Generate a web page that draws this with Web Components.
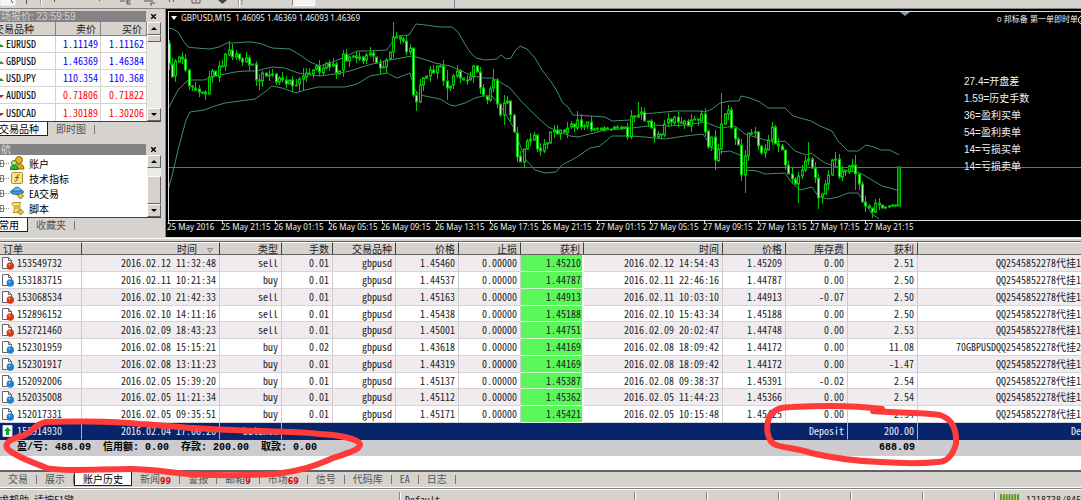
<!DOCTYPE html>
<html lang="zh-CN">
<head>
<meta charset="utf-8">
<title>GBPUSD,M15</title>
<style>
  html, body {
    height: 100%;
  }

  body {
    margin: 0;
    overflow: hidden;
    font-family: "Noto Sans Mono CJK SC", "Liberation Mono", "Noto Sans CJK SC", monospace;
    font-size: 10px;
    line-height: 12px;
    color: #1c1c1c;
    background: #d6d3ce;
  }
</style>
</head>
<body>
<trading-terminal></trading-terminal>

<script>
class TerminalToolbar extends HTMLElement {
  constructor () {
    super()
    this.shadow = this.attachShadow({ mode: 'open' })
    this.periods = ['M1', 'M5', 'M15', 'M30', 'H1', 'H4', 'D1', 'W1', 'MN']
  }

  connectedCallback () {
    this.render()
  }

  render () {
    this.shadow.innerHTML =
      /* html */`
        <style>
          :host {
            display: flex;
            align-items: flex-end;
            height: 9px;
            overflow: hidden;
            border-bottom: 1px solid #848284;
            box-sizing: border-box;
            background: #d6d3ce;
          }

          .tools {
            display: block;
            width: 246px;
            height: 8px;
            flex: none;
          }

          nav {
            display: flex;
            padding-bottom: 2px;
            padding-right: 1px;
            border-right: 1px solid #848284;
          }

          button {
            width: 23px;
            height: 22px;
            padding: 0 0 3px;
            display: flex;
            justify-content: center;
            align-items: flex-end;
            border: 1px solid transparent;
            background: none;
            color: #444;
            font: 9px/10px "Liberation Sans", sans-serif;
          }

          button[aria-pressed="true"] {
            background: #f4f2f0;
            border-color: #848284 #fff #fff #848284;
          }
        </style>
        <svg class="tools" viewBox="0 0 246 8" fill="none" stroke="#555">
          <path d="M1 0h14v5H1z" fill="#f4f2f0" stroke="#fff"/>
          <path d="M11 0l2 3M26.500 0v4M54.500 0v2M99 1l2-2M120 1h5M127 0v4M127 0h4M127 2h3M127 4h4M144 1h9M151 3h4M151 3v3M169 0l1 2M174 0l-1 2M192 0v3h8V0M196 0v2"/>
          <path d="M218 0h9l-4.500 4z" fill="#444" stroke="none"/>
          <path d="M40.500 0v5M238.500 0v7" stroke="#999"/>
          <path d="M239.500 0v7M41.500 0v5" stroke="#fff"/>
          <path d="M242 0v6" stroke="#999" stroke-dasharray="1 1" stroke-width="2"/>
        </svg>
        <nav>
          ${this.periods.map(p => `<button type="button" aria-pressed="${p === 'M15'}">${p}</button>`).join('')}
        </nav>
      `
  }
}

customElements.define('terminal-toolbar', TerminalToolbar)

class DockPanel extends HTMLElement {
  constructor () {
    super()
    this.shadow = this.attachShadow({ mode: 'open' })
  }

  connectedCallback () {
    this.render()
  }

  render () {
    this.shadow.innerHTML =
      /* html */`
        <style>
          :host {
            display: block;
          }

          header {
            display: flex;
            align-items: center;
            height: 12px;
            background: #d6d3ce;
          }

          h2 {
            flex: 1;
            height: 11px;
            margin: 0;
            padding-left: 3px;
            color: #d6d3ce;
            background: #848284;
            font: 10px/11px "Liberation Sans", "Noto Sans CJK SC", sans-serif;
          }

          button {
            width: 15px;
            height: 12px;
            padding: 0;
            border: 0;
            background: none;
          }

          svg {
            display: block;
            margin: auto;
          }

          .body {
            display: flex;
            border-bottom: 1px solid #424142;
          }

          .body slot {
            display: block;
            flex: 1;
            min-width: 0;
          }
        </style>
        <header>
          <h2>${this.getAttribute('heading')}</h2>
          <button type="button" aria-label="关闭">
            <svg width="5" height="5" viewBox="0 0 5 5"><path d="M0 0l5 5M5 0L0 5" stroke="#000" stroke-width="1.400"/></svg>
          </button>
        </header>
        <div class="body">
          <slot></slot>
          <scroll-rail thumb="${this.getAttribute('thumb')}"></scroll-rail>
        </div>
        <slot name="tabs"></slot>
      `
  }
}

customElements.define('dock-panel', DockPanel)

class ScrollRail extends HTMLElement {
  constructor () {
    super()
    this.shadow = this.attachShadow({ mode: 'open' })
  }

  connectedCallback () {
    this.render()
  }

  render () {
    const [offset, size] = this.getAttribute('thumb').split(' ')
    this.shadow.innerHTML =
      /* html */`
        <style>
          :host {
            display: flex;
            flex-direction: column;
            width: 14px;
            background: #ecebe8;
          }

          button, .thumb {
            box-sizing: border-box;
            border: 1px solid;
            border-color: #fff #636163 #636163 #fff;
            background: #d6d3ce;
          }

          button {
            height: 13px;
            padding: 0;
            flex: none;
          }

          svg {
            display: block;
            margin: auto;
          }

          .track {
            flex: 1;
            padding-top: ${offset}px;
          }

          .thumb {
            height: ${size}px;
          }
        </style>
        <button type="button" aria-label="向上"><svg width="6" height="3" viewBox="0 0 6 3"><path d="M0 3l3-3 3 3z"/></svg></button>
        <div class="track"><div class="thumb"></div></div>
        <button type="button" aria-label="向下"><svg width="6" height="3" viewBox="0 0 6 3"><path d="M0 0l3 3 3-3z"/></svg></button>
      `
  }
}

customElements.define('scroll-rail', ScrollRail)

class TabStrip extends HTMLElement {
  constructor () {
    super()
    this.shadow = this.attachShadow({ mode: 'open' })
  }

  connectedCallback () {
    this.render()
  }

  // "name:count" shows an unread counter beside the name
  render () {
    const active = this.getAttribute('active')
    const tabs = this.getAttribute('tabs').split(',').map(t => t.split(':'))
    this.shadow.innerHTML =
      /* html */`
        <style>
          :host {
            display: flex;
            align-items: flex-start;
            height: 16px;
          }

          button {
            display: flex;
            align-items: center;
            height: 14px;
            padding: 0 8px;
            border: 0;
            background: none;
            color: #555;
            font: inherit;
            white-space: nowrap;
          }

          button:not([aria-selected="true"])::after {
            content: "";
            width: 1px;
            height: 9px;
            margin-left: 8px;
            margin-right: -8px;
            background: #777;
          }

          button[aria-selected="true"] {
            color: #000;
            background: #fff;
            border: solid #222;
            border-width: 0 1px 1px;
          }

          b {
            align-self: flex-end;
            color: #e00010;
            font: bold 8px/8px "DejaVu Sans", sans-serif;
          }
        </style>
        ${tabs.map(([name, count]) => `
          <button type="button" role="tab" aria-selected="${name === active}">${name}${count ? `<b>${count}</b>` : ''}</button>
        `).join('')}
      `
  }
}

customElements.define('tab-strip', TabStrip)

class MarketWatch extends HTMLElement {
  constructor () {
    super()
    this.shadow = this.attachShadow({ mode: 'open' })
    this.quotes = [
      ['EURUSD', '1.11149', '1.11162', 'up'],
      ['GBPUSD', '1.46369', '1.46384', 'up'],
      ['USDJPY', '110.354', '110.368', 'up'],
      ['AUDUSD', '0.71806', '0.71822', 'down'],
      ['USDCAD', '1.30189', '1.30206', 'down']
    ]
  }

  connectedCallback () {
    this.render()
  }

  render () {
    this.shadow.innerHTML =
      /* html */`
        <style>
          :host {
            display: block;
          }

          table {
            width: 100%;
            table-layout: fixed;
            border-collapse: separate;
            border-spacing: 0;
          }

          th, td {
            box-sizing: border-box;
            padding: 0 2px;
            text-align: right;
            white-space: nowrap;
          }

          th {
            height: 14px;
            padding-right: 4px;
            font-weight: normal;
            background: #d6d3ce;
            border-right: 1px solid #848284;
            border-bottom: 1px solid #848284;
          }

          td {
            height: 17px;
            background: #fff;
            border-right: 1px solid #d6d3ce;
            border-bottom: 1px solid #d6d3ce;
          }

          tr:last-child td {
            border-bottom: 0;
          }

          th:first-child {
            text-align: left;
            padding-left: 6px;
          }

          td:first-child {
            text-align: left;
            color: #000;
          }

          svg {
            width: 16px;
            height: 5px;
          }

          .up { color: #0000ff; }
          .down { color: #ff0000; }
        </style>
        <table>
          <colgroup><col><col style="width: 45px"><col style="width: 46px"></colgroup>
          <thead><tr><th>交易品种</th><th>卖价</th><th>买价</th></tr></thead>
          <tbody>
            ${this.quotes.map(([name, bid, ask, dir]) => `
              <tr class="${dir}">
                <td><svg viewBox="0 0 16 5"><path d="${dir === 'up' ? 'M8 4l3-3 3 3z' : 'M8 1l3 3 3-3z'}" fill="${dir === 'up' ? '#2c8a3c' : '#b02020'}"/></svg>${name}</td>
                <td>${bid}</td>
                <td>${ask}</td>
              </tr>`).join('')}
          </tbody>
        </table>
      `
  }
}

customElements.define('market-watch', MarketWatch)

class NavigatorTree extends HTMLElement {
  constructor () {
    super()
    this.shadow = this.attachShadow({ mode: 'open' })
    this.items = [
      ['账户', '<circle cx="9" cy="4" r="3.500" fill="#e8b818" stroke="#8a6a10"/><path d="M5 13c0-7 9-7 9 0z" fill="#e0aa10" stroke="#8a6a10"/><circle cx="4" cy="7" r="2.500" fill="#f4d878" stroke="#2c8a3c"/><path d="M0 13.500c0-6 8-6 8 0z" fill="#28b838" stroke="#187828"/>'],
      ['技术指标', '<rect x="1.500" y="1.500" width="11" height="11" rx="1" fill="#f8e488" stroke="#b89020"/><path d="M9.500 4c-2-1-2.500 1-2.500 3s-.5 4-2.500 3M5 6.500h4" fill="none" stroke="#6a5010"/>'],
      ['EA交易', '<ellipse cx="7" cy="6" rx="6.500" ry="2.500" fill="#3898d8" stroke="#1c68a0"/><path d="M3 5c0-5 8-5 8 0z" fill="#68c0f0" stroke="#1c68a0"/><path d="M10.500 7l3 3-3 3-3-3z" fill="#f0c830" stroke="#907010"/>'],
      ['脚本', '<path d="M3 1.500h8c-2 1-1 3-1 5v5H3c2-2 1-5 1-7-2 0-3-2-1-3z" fill="#f8e078" stroke="#b89020"/><path d="M5 5h4M5 7h4" stroke="#b89020"/><path d="M10.500 8l3 3-3 3-3-3z" fill="#f0c830" stroke="#907010"/>']
    ]
  }

  connectedCallback () {
    this.render()
  }

  render () {
    this.shadow.innerHTML =
      /* html */`
        <style>
          :host {
            display: block;
            background: #fff;
          }

          ul {
            margin: 0;
            padding: 1px 0 1px 9px;
            list-style: none;
          }

          li {
            display: flex;
            align-items: center;
            height: 15px;
            color: #000;
          }

          .branch {
            width: 13px;
            height: 15px;
          }

          .icon {
            width: 15px;
            height: 15px;
            margin-right: 4px;
          }
        </style>
        <ul>
          ${this.items.map(([name, art]) => `
            <li>
              <svg class="branch" viewBox="0 0 13 15"><path d="M.5 4.500h6v6h-6zM1.500 7.500h4M3.500 5.500v4" fill="none" stroke="#777"/><path d="M7 7.500h6" stroke="#999" stroke-dasharray="1 1"/></svg>
              <svg class="icon" viewBox="0 0 15 15">${art}</svg>
              <span>${name}</span>
            </li>`).join('')}
        </ul>
      `
  }
}

customElements.define('navigator-tree', NavigatorTree)

class PriceChart extends HTMLElement {
  constructor () {
    super()
    this.shadow = this.attachShadow({ mode: 'open' })
    this.step = 3.35
    this.dates = [
      '25 May 2016', '25 May 21:15', '26 May 01:15', '26 May 05:15', '26 May 09:15', '26 May 13:15', '26 May 17:15',
      '26 May 21:15', '27 May 01:15', '27 May 05:15', '27 May 09:15', '27 May 13:15', '27 May 17:15', '27 May 21:15'
    ]
    this.stats = ['27.4=开盘差', '1.59=历史手数', '36=盈利买单', '54=盈利卖单', '14=亏损买单', '14=亏损卖单']
    this.closes = '168,62 172,75 175,65 178,54 181,56 184,68 188,80 190,92 195,88 200,93 204,97 208,80 212,72 216,74 220,66 224,62 226,51 230,52 236,57 242,60 248,62 253,66 256,84 259,78 262,76 270,74 275,79 283,80 290,83 296,85 299,82 301,72 305,76 309,73 312,68 316,69 322,70 327,62 331,65 336,72 340,70 343,55 348,61 354,55 360,60 365,56 369,55 373,54 376,66 381,67 385,64 388,60 391,40 395,38 399,36 402,40 405,53 409,44 411,55 413,97 416,101 419,90 423,78 427,74 431,73 436,68 439,65 442,73 446,92 450,84 454,74 459,73 464,83 468,78 472,72 474,68 478,71 481,97 486,98 491,90 494,77 497,105 500,119 503,100 507,103 510,115 514,132 517,160 520,161 523,150 527,143 531,135 535,138 537,148 541,150 545,146 550,133 556,131 562,134 567,127 573,127 576,119 580,127 586,123 590,130 598,129 605,129 612,128 620,127 624,127 627,136 631,118 636,114 642,115 646,121 650,126 655,137 660,137 662,127 667,121 673,119 680,122 686,124 692,121 697,118 703,116 705,134 708,148 711,138 715,160 719,148 722,115 727,110 731,124 735,142 739,148 742,180 745,157 748,132 754,133 758,143 762,157 766,146 770,130 773,130 775,143 781,150 785,162 788,176 792,178 797,185 800,170 804,163 810,158 814,175 818,196 822,194 826,184 830,165 835,158 839,178 845,170 851,165 855,170 858,184 861,200 865,205 870,213 874,205 878,205 885,208 890,205 896,206 898,167 902,167'
      .split(' ').map(p => p.split(',').map(Number))
    // [x, high, low] of the bars with a long shadow
    this.spikes = [
      [229, 41, 54], [259, 74, 90], [302, 68, 90], [393, 22, 45], [416, 94, 111], [447, 70, 100], [494, 69, 92], [502, 95, 125],
      [541, 143, 156], [577, 111, 124], [591, 116, 132], [637, 102, 118], [715, 130, 170], [721, 93, 150], [745, 150, 193],
      [771, 122, 140], [798, 172, 203], [809, 142, 165], [818, 180, 209], [835, 152, 166], [855, 155, 190]
    ]
    this.bands = [
      '168,28 173,29 178,32 184,42 188,47 196,48 210,49 219,47 227,43 235,43 245,42 252,42 262,44 272,48 290,49 300,55 310,62 320,66 330,63 345,57 357,51 370,51 387,50 391,44 397,36 409,35 416,24 425,25 440,27 452,27 458,32 466,46 470,52 476,58 485,60 497,59 501,55 506,59 511,58 515,51 520,46 527,49 535,58 542,70 552,83 558,93 562,102 568,107 573,115 590,116 605,117 612,121 630,120 640,114 655,113 675,111 700,111 705,112 712,109 720,103 730,101 739,101 741,96 750,98 760,102 768,108 785,108 793,116 811,121 820,126 832,131 838,141 848,151 858,151 866,145 874,147 881,150 890,150 899,155',
      '168,109 178,90 188,80 204,80 215,76 225,74 235,72 245,71 256,71 272,67 285,68 298,73 310,75 320,76 335,74 350,71 365,66 380,62 395,59 412,56 420,58 435,63 450,66 460,70 470,75 482,78 492,78 500,82 510,88 520,100 535,115 548,127 560,132 570,136 578,137 590,134 605,130 620,129 640,127 655,125 670,126 685,125 705,122 720,128 735,126 745,134 755,137 765,140 775,142 785,141 795,151 806,155 811,153 825,163 835,166 845,170 860,173 872,180 882,186 890,188 899,191',
      '168,190 172,176 178,150 186,120 190,112 204,110 215,106 225,103 240,101 255,99 265,92 272,86 282,88 296,93 305,90 318,87 345,87 357,84 370,76 387,73 397,78 410,73 415,90 420,95 440,99 450,105 455,106 465,103 475,98 483,96 492,96 500,105 508,118 515,130 520,145 526,160 535,170 545,173 556,172 562,165 577,157 590,148 600,146 612,136 630,136 645,137 665,139 685,136 703,134 712,148 720,152 730,151 740,155 746,170 757,171 765,174 785,173 792,183 800,190 812,187 818,196 828,199 838,197 848,193 858,193 865,203 872,214 879,219'
    ]
  }

  connectedCallback () {
    this.render()
  }

  closeAt (x) {
    const i = Math.max(1, this.closes.findIndex(p => p[0] >= x))
    const [x0, y0] = this.closes[i - 1]
    const [x1, y1] = this.closes[i]
    return y0 + (y1 - y0) * (x - x0) / (x1 - x0)
  }

  candles () {
    let out = ''
    let open = 43
    for (let i = 0; i < 219; i++) {
      const x = 168.5 + i * this.step
      const calm = (x > 590 && x < 625) || x > 880
      const close = this.closeAt(x) + (calm ? 1 : 3) * Math.sin(i * 2.4)
      const reach = calm ? 1 : 3
      let high = Math.min(open, close) - reach - reach * Math.sin(i * 1.7)
      let low = Math.max(open, close) + reach + reach * Math.cos(i * 2.9)
      const spike = this.spikes.find(s => Math.abs(s[0] - x) <= this.step / 2)
      if (spike) {
        high = Math.min(spike[1], high)
        low = Math.max(spike[2], low)
      }
      if (i === 218) {
        out += `<rect x="897.500" y="167" width="3" height="39" fill="#006800"/>`
        break
      }
      const top = Math.round(Math.min(open, close))
      const height = Math.max(1, Math.round(Math.abs(open - close)))
      const px = Math.round(x)
      out += `<path d="M${px + 0.5} ${Math.round(high)}V${Math.round(low)}"/>`
      out += `<rect x="${px - 0.5}" y="${top}" width="2" height="${height}" fill="${close > open ? '#a8ffa8' : '#002800'}"/>`
      open = close
    }
    return out
  }

  render () {
    this.shadow.innerHTML =
      /* html */`
        <style>
          :host {
            display: block;
            position: relative;
            overflow: hidden;
            background: #000;
            color: #f0f0f0;
          }

          svg {
            display: block;
          }

          .frame {
            border: solid #dedede;
            border-width: 1px 0 1px 1px;
            position: absolute;
            inset: 2px 0 16px 2px;
          }

          text {
            fill: #f0f0f0;
            font: 8px "Noto Sans", sans-serif;
          }

          .expert {
            position: absolute;
            top: 5px;
            right: -7px;
            display: flex;
            align-items: center;
            font: 8px/12px "Liberation Sans", "Noto Sans CJK SC", sans-serif;
          }

          ul {
            position: absolute;
            top: 64px;
            right: 50px;
            width: 67px;
            margin: 0;
            padding: 0;
            list-style: none;
            white-space: nowrap;
            font: 10px/17px "Liberation Sans", "Noto Sans CJK SC", sans-serif;
          }
        </style>
        <div class="frame"></div>
        <svg width="736" height="228" viewBox="166 9 736 228" overflow="visible">
          <path d="M168 167.500H3000" stroke="#60707c"/>
          <g fill="none" stroke="#3f9068">${this.bands.map(b => `<polyline points="${b}"/>`).join('')}</g>
          <g stroke="#00c800">${this.candles()}</g>
          <path d="M900 12h10l-5 4z" fill="#8496ac"/>
          <path d="M171 16h6l-3 4z" fill="#fff"/>
          <text x="181" y="21" xml:space="preserve">GBPUSD,M15  1.46095 1.46369 1.46093 1.46369</text>
          ${this.dates.map((d, i) => `
            <path d="M${Math.round(168 + i * 53.6) + 0.5} 220v3" stroke="#dedede"/>
            <text x="${Math.round(167 + i * 53.6)}" y="230">${d}</text>`).join('')}
        </svg>
        <div class="expert">
          <span>0 邦标备 第一单即时单</span>
          <svg width="10" height="10" viewBox="0 0 10 10" fill="none" stroke="#f0f0f0"><circle cx="5" cy="5" r="4.500"/><path d="M2.500 6c1 2 4 2 5 0M3 3.500h1M6 3.500h1"/></svg>
        </div>
        <ul>${this.stats.map(s => `<li>${s}</li>`).join('')}</ul>
      `
  }
}

customElements.define('price-chart', PriceChart)

class AccountHistory extends HTMLElement {
  constructor () {
    super()
    this.shadow = this.attachShadow({ mode: 'open' })
    this.widths = [82, 138, 62, 51, 63, 63, 62, 63, 139, 63, 62, 70]
    this.heads = ['订单', '时间', '类型', '手数', '交易品种', '价格', '止损', '获利', '时间', '价格', '库存费', '获利', '']
    this.orders = [
      ['153549732', '2016.02.12 11:32:48', 'sell', '0.01', '1.45460', '1.45210', '2016.02.12 14:54:43', '1.45209', '0.00', '2.51', 'QQ2545852278代挂1'],
      ['153183715', '2016.02.11 10:21:34', 'buy', '0.01', '1.44537', '1.44787', '2016.02.11 22:46:16', '1.44787', '0.00', '2.50', 'QQ2545852278代挂1'],
      ['153068534', '2016.02.10 21:42:33', 'sell', '0.01', '1.45163', '1.44913', '2016.02.11 10:03:10', '1.44913', '-0.07', '2.50', 'QQ2545852278代挂1'],
      ['152896152', '2016.02.10 14:11:16', 'sell', '0.01', '1.45438', '1.45188', '2016.02.10 15:43:34', '1.45188', '0.00', '2.50', 'QQ2545852278代挂1'],
      ['152721460', '2016.02.09 18:43:23', 'sell', '0.01', '1.45001', '1.44751', '2016.02.09 20:02:47', '1.44748', '0.00', '2.53', 'QQ2545852278代挂1'],
      ['152301959', '2016.02.08 15:15:21', 'buy', '0.02', '1.43618', '1.44169', '2016.02.08 18:09:42', '1.44172', '0.00', '11.08', '70GBPUSDQQ2545852278代挂2'],
      ['152301917', '2016.02.08 13:11:23', 'buy', '0.01', '1.44319', '1.44169', '2016.02.08 18:09:42', '1.44172', '0.00', '-1.47', 'QQ2545852278代挂1'],
      ['152092006', '2016.02.05 15:39:20', 'buy', '0.01', '1.45137', '1.45387', '2016.02.08 09:38:37', '1.45391', '-0.02', '2.54', 'QQ2545852278代挂1'],
      ['152035008', '2016.02.05 11:21:34', 'buy', '0.01', '1.45112', '1.45362', '2016.02.05 11:44:23', '1.45366', '0.00', '2.54', 'QQ2545852278代挂1'],
      ['152017331', '2016.02.05 09:35:51', 'buy', '0.01', '1.45171', '1.45421', '2016.02.05 10:15:48', '1.45425', '0.00', '2.54', 'QQ2545852278代挂1']
    ]
  }

  connectedCallback () {
    this.render()
  }

  icon (type) {
    const ball = type === 'sell' ? '#d83818' : '#2080d0'
    return /* html */`
      <svg viewBox="0 0 12 14">
        <path d="M.5 1.500h6l3 3v8h-9z" fill="#fff" stroke="#666"/>
        <path d="M6.500 1.500v3h3" fill="none" stroke="#666"/>
        <circle cx="8.300" cy="10" r="3.700" fill="${ball}"/>
        <circle cx="7.500" cy="8.800" r="1" fill="#fff" opacity=".5"/>
      </svg>`
  }

  row ([id, opened, type, lots, price, target, closed, exit, swap, profit, note]) {
    return /* html */`
      <tr>
        <td><span class="id">${this.icon(type)}${id}</span></td><td>${opened}</td><td>${type}</td><td>${lots}</td><td>gbpusd</td><td>${price}</td>
        <td>0.00000</td><td class="hit">${target}</td><td>${closed}</td><td>${exit}</td><td>${swap}</td><td>${profit}</td><td>${note}</td>
      </tr>`
  }

  render () {
    this.shadow.innerHTML =
      /* html */`
        <style>
          :host {
            display: block;
            position: relative;
            padding-bottom: 14px;
            background: #fff;
          }

          table {
            width: 100%;
            table-layout: fixed;
            border-collapse: separate;
            border-spacing: 0;
          }

          th, td {
            box-sizing: border-box;
            padding: 0 3px;
            text-align: right;
            white-space: nowrap;
            overflow: hidden;
          }

          th {
            height: 13px;
            line-height: 11px;
            font-weight: normal;
            background: #d6d3ce;
            border-right: 1px solid #424142;
            border-top: 1px solid #fff;
            border-bottom: 1px solid #636163;
          }

          th:first-child, td:first-child {
            text-align: left;
          }

          th button {
            padding: 0;
            border: 0;
            background: none;
            color: inherit;
            font: inherit;
          }

          th button svg {
            width: 6px;
            height: 5px;
            margin: 0 3px 0 10px;
          }

          tbody tr {
            height: 17px;
            background: #fff;
          }

          tbody tr:nth-child(odd) {
            background: #efebef;
          }

          tbody tr:nth-child(4n) {
            height: 16px;
          }

          td {
            border-right: 1px solid #ceccce;
            border-bottom: 1px solid #d6d3d6;
          }

          td:first-child {
            padding-left: 2px;
          }

          .id {
            display: flex;
            align-items: center;
            gap: 3px;
          }

          .id svg {
            width: 12px;
            height: 14px;
          }

          td:last-child, th:last-child {
            padding-right: 0;
            border-right: 0;
          }

          .hit {
            background: #5af75a;
            border-bottom-color: #d8ffd8;
            border-right: 2px solid #f4fff4;
            padding-right: 1px;
          }

          tbody tr.deposit {
            color: #e8ecf8;
            background: #08246b;
          }

          .deposit td {
            border-bottom-color: #08246b;
            border-right-color: #a8b0cc;
          }

          tbody tr.total {
            background: #cecbce;
            color: #000;
            font: bold 10px/12px "Liberation Mono", "Noto Sans CJK SC", monospace;
          }

          .total td {
            border: 0;
            white-space: pre;
          }

          .total td:first-child {
            padding-left: 17px;
          }

          /* pen strokes laid over the rows */
          .pen {
            position: absolute;
            left: 0;
            top: 0;
            z-index: 1;
            pointer-events: none;
          }
        </style>
        <table>
          <colgroup>${this.widths.map(w => `<col style="width: ${w}px">`).join('')}<col></colgroup>
          <thead>
            <tr>${this.heads.map((h, i) => i === 1
              ? `<th aria-sort="descending"><button type="button">${h}<svg viewBox="0 0 6 5"><path d="M.5.5h5l-2.500 4z" fill="none" stroke="#848284"/></svg></button></th>`
              : `<th>${h}</th>`).join('')}</tr>
          </thead>
          <tbody>
            ${this.orders.map(o => this.row(o)).join('')}
            <tr class="deposit">
              <td><span class="id"><svg viewBox="0 0 12 14"><path d="M1 1.500h9v11H1z" fill="#fff" stroke="#ddd"/><path d="M5.500 3l3.500 4H7v4H4V7H2z" fill="#18a028"/></svg>151914930</span></td>
              <td>2016.02.04 17:06:26</td><td>balance</td><td colspan="8">Deposit</td><td>200.00</td><td>De</td>
            </tr>
            <tr class="total">
              <td colspan="11">盈/亏: 488.09  信用额: 0.00  存款: 200.00  取款: 0.00</td><td>688.09</td><td></td>
            </tr>
          </tbody>
        </table>
        <svg class="pen" width="960" height="245" viewBox="0 241 960 245" overflow="visible" fill="none" stroke="#ff3a3a" stroke-width="6" stroke-linejoin="round" stroke-linecap="round">
          <path d="M320 433C300 430 270 431 233 429C190 428 165 424 140 423C110 420 60 420 46 421C34 423 32 432 22 435C10 438 5 442 7 447C12 454 34 462 47 467C60 471 100 468 130 468C155 468 170 472 190 473C220 475 255 474 275 473C300 470 315 465 333 457C350 451 360 449 360 443C358 438 340 434 320 433"/>
          <path d="M873 410C895 412 920 411 940 414C952 418 957 428 956 443C953 453 948 461 938 461C918 463 895 462 880 461C855 460 832 457 811 452C800 448 785 447 776 444C766 440 766 425 769 417C772 409 780 406 792 406C830 404 860 405 882 408"/>
        </svg>
      `
  }
}

customElements.define('account-history', AccountHistory)

class StatusBar extends HTMLElement {
  constructor () {
    super()
    this.shadow = this.attachShadow({ mode: 'open' })
  }

  connectedCallback () {
    this.render()
  }

  render () {
    this.shadow.innerHTML =
      /* html */`
        <style>
          :host {
            display: flex;
            height: 20px;
            border-top: 1px solid #848284;
            box-shadow: inset 0 1px #fff;
            line-height: 16px;
            color: #222;
            white-space: nowrap;
          }

          div {
            box-sizing: border-box;
            width: 72px;
            margin-top: 3px;
            border-left: 1px solid #848284;
            box-shadow: inset 1px 0 #fff;
          }

          .help {
            flex: 1;
            min-width: 0;
            overflow: hidden;
            border: 0;
            box-shadow: none;
          }

          .help span {
            margin-left: -11px;
          }

          .profile {
            width: 235px;
            padding-left: 5px;
          }

          .traffic {
            display: flex;
            width: 87px;
            padding-left: 5px;
          }

          svg {
            margin-right: 7px;
          }
        </style>
        <div class="help"><span>寻求帮助,请按F1键</span></div>
        <div class="profile">Default</div>
        <div></div><div></div><div></div><div></div><div></div>
        <div class="traffic">
          <svg width="20" height="12" viewBox="0 0 20 12"><path d="M0 7h20" stroke="#5a9818" stroke-width="10" stroke-dasharray="2 1"/></svg>
          <span>1218738/845</span>
        </div>
      `
  }
}

customElements.define('status-bar', StatusBar)

class TradingTerminal extends HTMLElement {
  constructor () {
    super()
    this.shadow = this.attachShadow({ mode: 'open' })
  }

  connectedCallback () {
    this.render()
  }

  render () {
    this.shadow.innerHTML =
      /* html */`
        <style>
          :host {
            display: flex;
            flex-direction: column;
          }

          main {
            display: flex;
          }

          /* the docked column runs past the left edge of the window */
          aside {
            display: flex;
            flex-direction: column;
            gap: 5px;
            flex: none;
            width: 173px;
            margin-left: -12px;
            padding: 1px 4px 0 0;
            border-right: 1px solid #848284;
          }

          aside tab-strip {
            padding-left: 2px;
          }

          price-chart {
            flex: 1;
          }

          .terminal {
            margin-top: 1px;
            padding-top: 2px;
            border-top: 1px solid #fff;
          }

          .terminal account-history {
            border-top: 1px solid #636163;
            border-bottom: 2px solid #636163;
          }

          .terminal tab-strip {
            height: 15px;
            border-bottom: 1px solid #fff;
          }
        </style>
        <terminal-toolbar></terminal-toolbar>
        <main>
          <aside>
            <dock-panel heading="市场报价: 23:59:59" thumb="0 7">
              <market-watch></market-watch>
              <tab-strip slot="tabs" tabs="交易品种,即时图" active="交易品种"></tab-strip>
            </dock-panel>
            <dock-panel heading="导航" thumb="8 28">
              <navigator-tree></navigator-tree>
              <tab-strip slot="tabs" tabs="常用,收藏夹" active="常用"></tab-strip>
            </dock-panel>
          </aside>
          <price-chart></price-chart>
        </main>
        <section class="terminal">
          <account-history></account-history>
          <tab-strip tabs="交易,展示,账户历史,新闻:99,警报,邮箱:9,市场:69,信号,代码库,EA,日志" active="账户历史"></tab-strip>
        </section>
        <status-bar></status-bar>
      `
  }
}

customElements.define('trading-terminal', TradingTerminal)
</script>
</body>
</html>
